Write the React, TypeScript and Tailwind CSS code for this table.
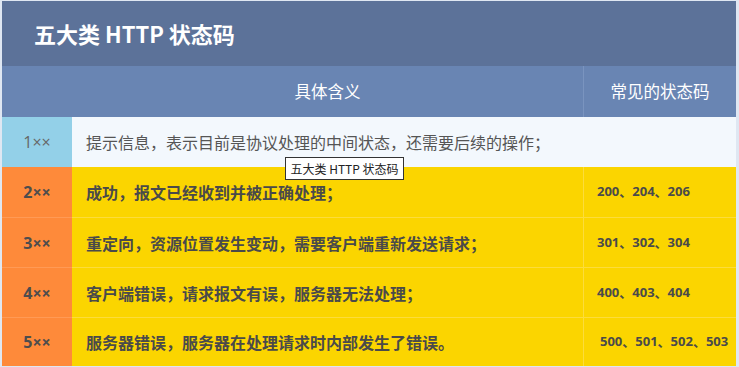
import React from 'react';

type Row = {
  cls: string;
  desc: string;
  codes: string;
  first: string;
  body: string;
};

const rows: Row[] = [
  {
    cls: '1××',
    desc: '提示信息，表示目前是协议处理的中间状态，还需要后续的操作；',
    codes: '',
    first: 'bg-[#93d0e8] text-[#666] font-normal',
    body: 'bg-[#f3f8fd] text-[#555] font-normal',
  },
  {
    cls: '2××',
    desc: '成功，报文已经收到并被正确处理；',
    codes: '200、204、206',
    first: 'bg-[#fe8a3a] text-[#4d4d4d] font-bold',
    body: 'bg-[#fbd500] text-[#4a4a4a] font-bold',
  },
  {
    cls: '3××',
    desc: '重定向，资源位置发生变动，需要客户端重新发送请求；',
    codes: '301、302、304',
    first: 'bg-[#fe8a3a] text-[#4d4d4d] font-bold',
    body: 'bg-[#fbd500] text-[#4a4a4a] font-bold',
  },
  {
    cls: '4××',
    desc: '客户端错误，请求报文有误，服务器无法处理；',
    codes: '400、403、404',
    first: 'bg-[#fe8a3a] text-[#4d4d4d] font-bold',
    body: 'bg-[#fbd500] text-[#4a4a4a] font-bold',
  },
  {
    cls: '5××',
    desc: '服务器错误，服务器在处理请求时内部发生了错误。',
    codes: '500、501、502、503',
    first: 'bg-[#fe8a3a] text-[#4d4d4d] font-bold',
    body: 'bg-[#fbd500] text-[#4a4a4a] font-bold',
  },
];

const App: React.FC = () => {
  return (
    <div className="relative w-[739px] h-[367px] overflow-hidden bg-[#dfe7f2] pl-[2px] pt-[1px] font-['Noto_Sans_CJK_SC',sans-serif]">
      <div className="w-[734px]">
        {/* Title */}
        <div className="h-[65px] bg-[#5c7299] flex items-center pl-[32px]">
          <h1 className="text-[22px] font-bold text-white">五大类 HTTP 状态码</h1>
        </div>

        {/* Header row */}
        <div className="grid grid-cols-[581px_153px] h-[51px] bg-[#6985b3] text-white text-[16.5px]">
          <div className="flex items-center justify-center pl-[70px]">具体含义</div>
          <div className="flex items-center justify-center border-l border-[#7a94bf]">常见的状态码</div>
        </div>

        {/* Rows */}
        {rows.map((r, i) => (
          <div
            key={r.cls}
            className={`grid grid-cols-[70px_511px_153px] ${i === 4 ? 'h-[49px]' : 'h-[50px]'}`}
          >
            <div className={`flex items-center justify-center text-[16px] font-['Open_Sans',sans-serif] ${r.first} ${i > 1 ? 'border-t border-[#ff9a55]' : ''}`}>
              {r.cls}
            </div>
            <div className={`flex items-center pl-[14px] text-[16px] ${r.body} ${i > 1 ? 'border-t border-[#fcdc3c]' : ''}`}>
              {r.desc}
            </div>
            <div
              className={`flex items-center ${i === 4 ? 'pl-[16px]' : 'pl-[13px]'} text-[13px] font-['Open_Sans','Noto_Sans_CJK_SC',sans-serif] ${r.body} ${i > 0 ? 'border-l border-[#fcdc3c]' : ''} ${i > 1 ? 'border-t border-[#fcdc3c]' : ''}`}
            >
              {r.codes}
            </div>
          </div>
        ))}
      </div>

      {/* Tooltip */}
      <div className="absolute left-[285px] top-[157px] h-[23px] w-[119px] bg-white border border-[#333] flex items-center justify-center text-[12px] text-[#222]">
        五大类 HTTP 状态码
      </div>
    </div>
  );
};

export default App;
